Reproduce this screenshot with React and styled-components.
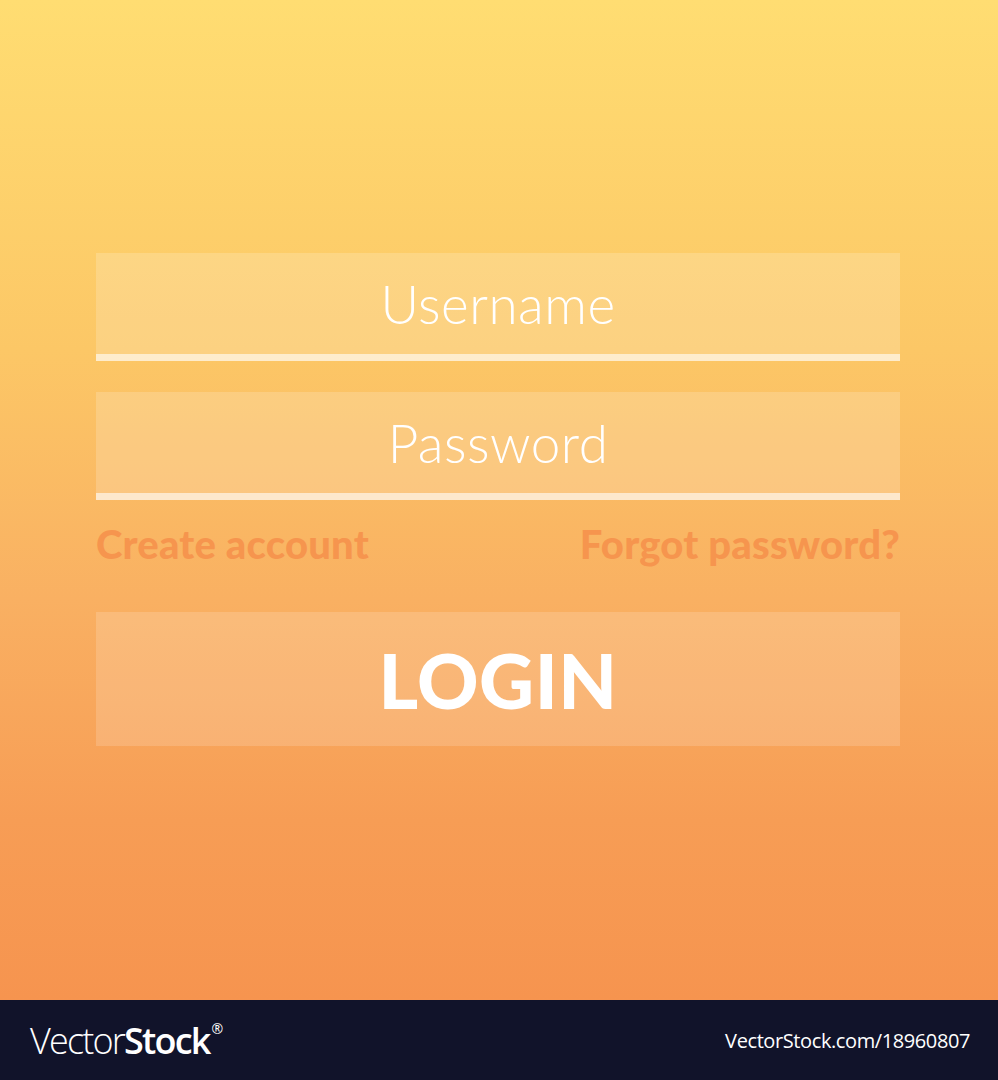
import React from 'react';
import styled, { createGlobalStyle } from 'styled-components';

const GlobalStyle = createGlobalStyle`
  html, body {
    margin: 0;
    padding: 0;
  }
  body {
    font-family: "Lato", "Open Sans", sans-serif;
  }
  * { box-sizing: border-box; }
`;

const Page = styled.div`
  width: 998px;
  height: 1080px;
  display: flex;
  flex-direction: column;
`;

const Stage = styled.main`
  height: 1000px;
  background: linear-gradient(180deg, #ffdd72 0%, #fcc766 35%, #f9b062 60%, #f79d55 82%, #f6944f 100%);
  padding: 253px 98px 0 96px;
  display: flex;
  flex-direction: column;
`;

const Field = styled.div`
  height: 108px;
  background: rgba(255, 255, 255, 0.18);
  border-bottom: 7px solid rgba(255, 255, 255, 0.6);
  display: flex;
  align-items: center;
  justify-content: center;
  margin-bottom: ${({ gap }) => gap || 0}px;
`;

const Placeholder = styled.span`
  color: #ffffff;
  font-family: "Lato", sans-serif;
  font-weight: 300;
  font-size: 53px;
  letter-spacing: 0.5px;
`;

const LinkRow = styled.div`
  height: 112px;
  display: flex;
  justify-content: space-between;
  align-items: center;
  padding-bottom: 24px;
`;

const TextLink = styled.a`
  color: #f6954e;
  font-family: "Lato", sans-serif;
  font-weight: 900;
  font-size: 40px;
  letter-spacing: 0.2px;
  text-decoration: none;
  cursor: pointer;
`;

const LoginButton = styled.button`
  height: 134px;
  border: none;
  background: rgba(255, 255, 255, 0.16);
  color: #ffffff;
  font-family: "Lato", sans-serif;
  font-weight: 900;
  font-size: 76px;
  letter-spacing: 0.5px;
  cursor: pointer;
`;

const Footer = styled.footer`
  height: 80px;
  background: #11132a;
  display: flex;
  align-items: center;
  justify-content: space-between;
  padding: 0 28px 0 30px;
  color: #ffffff;
`;

const Brand = styled.div`
  font-family: "Open Sans", sans-serif;
  font-size: 36px;
  letter-spacing: -1.8px;
  display: flex;
  align-items: flex-start;
`;

const BrandLight = styled.span`
  font-weight: 300;
`;

const BrandBold = styled.span`
  font-weight: 600;
`;

const Reg = styled.sup`
  font-size: 14px;
  margin-left: 2px;
  line-height: 1;
  margin-top: 6px;
`;

const StockId = styled.span`
  font-family: "Open Sans", sans-serif;
  font-size: 20px;
  letter-spacing: -0.4px;
`;

export default function App() {
  return (
    <Page>
      <GlobalStyle />
      <Stage>
        <Field gap={31}>
          <Placeholder>Username</Placeholder>
        </Field>
        <Field>
          <Placeholder>Password</Placeholder>
        </Field>
        <LinkRow>
          <TextLink>Create account</TextLink>
          <TextLink>Forgot password?</TextLink>
        </LinkRow>
        <LoginButton>LOGIN</LoginButton>
      </Stage>
      <Footer>
        <Brand>
          <BrandLight>Vector</BrandLight>
          <BrandBold>Stock</BrandBold>
          <Reg>®</Reg>
        </Brand>
        <StockId>VectorStock.com/18960807</StockId>
      </Footer>
    </Page>
  );
}
